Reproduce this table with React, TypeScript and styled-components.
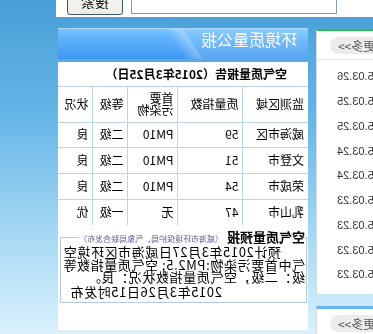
import styled, { createGlobalStyle } from 'styled-components';

//#region global
const GlobalStyle = createGlobalStyle`
  *, *::before, *::after { box-sizing: border-box; }
  html, body { margin: 0; padding: 0; }
  body {
    width: 373px;
    height: 334px;
    overflow: hidden;
    background: linear-gradient(to bottom, #479fd7 0, #66b6e7 35%, #a6d8f3 70%, #daf1fc 100%);
    font-family: "Noto Sans CJK SC", "Noto Sans", sans-serif;
    color: #000;
  }
`;

// the whole shot is flipped left to right
const Mirror = styled.div`
  width: 373px;
  height: 334px;
  overflow: hidden;
  transform: scaleX(-1);
`;
//#endregion

//#region search bar
const SearchBar = styled.div`
  width: 317px;
  height: 17px;
  background: #fff;
  display: flex;
  align-items: flex-end;
  gap: 8px;
  padding-left: 36px;
  overflow: hidden;
`;

const SearchInput = styled.input`
  width: 206px;
  height: 24px;
  margin-bottom: 3px;
  border: 1px solid #7f9db9;
  background: #fff;
  flex-shrink: 0;
`;

const SearchButton = styled.button`
  width: 56px;
  height: 28px;
  margin-bottom: 2px;
  flex-shrink: 0;
  border: 1px solid #3d5873;
  border-radius: 3px;
  background: linear-gradient(to bottom, #fbfbf8, #ecebe5);
  font-family: "Noto Sans CJK SC", sans-serif;
  font-size: 14px;
  color: #111;
  padding: 0;
`;
//#endregion

//#region columns
const Columns = styled.div`
  display: flex;
  align-items: flex-start;
  gap: 8px;
  margin-top: 11px;
`;

const Side = styled.div`
  width: 57px;
  margin-top: 1px;
  display: flex;
  flex-direction: column;
  gap: 12px;
  flex-shrink: 0;
`;

const SidePanel = styled.div<{ $accent: string; $line: number; $height: number }>`
  height: ${(p) => p.$height}px;
  background: #fff;
  border-top: ${(p) => p.$line}px solid ${(p) => p.$accent};
  border-right: 1px solid #d4d9de;
  overflow: hidden;
`;

const SideHead = styled.div`
  height: 29px;
  display: flex;
  justify-content: flex-end;
  align-items: center;
  padding-right: 13px;
  border-bottom: 1px solid #e3e3e3;
`;

const MoreButton = styled.span`
  flex-shrink: 0;
  height: 17px;
  line-height: 17px;
  padding: 0 8px;
  border-radius: 9px;
  background: #ececec;
  color: #555;
  font-size: 12px;
  white-space: nowrap;
`;

const DateList = styled.ul`
  list-style: none;
  margin: 0;
  padding: 4px 0 0;
`;

const DateRow = styled.li`
  height: 24.75px;
  display: flex;
  justify-content: flex-end;
  align-items: center;
  padding-right: 20px;
  font-family: "Liberation Sans", Arial, sans-serif;
  font-size: 11px;
  color: #333;
  white-space: nowrap;
`;
//#endregion

//#region main
const Main = styled.div`
  width: 250px;
  flex-shrink: 0;
  display: flex;
  flex-direction: column;
  gap: 3px;
`;

const Banner = styled.div`
  height: 31px;
  border-top: 1px solid #a6dbff;
  padding: 1px 0 0 11px;
  color: #fff;
  font-size: 16px;
  line-height: 18px;
  background:
    linear-gradient(123deg, rgba(255,255,255,0.14) 0%, rgba(255,255,255,0.14) 46%, rgba(255,255,255,0.32) 47%, rgba(255,255,255,0) 53%),
    linear-gradient(to bottom, #7cc6ff 0, #66b8fd 20%, #3e96f1 100%);
`;

const Panel = styled.div`
  height: 268px;
  background: #fff;
`;

const Table = styled.table`
  width: 250px;
  border-collapse: collapse;
  border-style: hidden;
  table-layout: fixed;
  font-size: 12px;
`;

const Cell = styled.td`
  border: 1px solid #bcd4e7;
  padding: 0 0 0 4px;
  text-align: left;
  vertical-align: middle;
  white-space: nowrap;
  line-height: 12.5px;
`;

const TitleCell = styled.td`
  height: 24px;
  border-bottom: 1px solid #bcd4e7;
  padding-left: 21px;
  font-size: 12px;
  font-weight: bold;
  text-align: left;
  white-space: nowrap;
`;

const Row = styled.tr<{ $h: number }>`
  height: ${(p) => p.$h}px;
`;

const Forecast = styled.fieldset`
  margin: 3px 2px 0 1px;
  padding: 0 0 3px 1px;
  border: 1px solid #b4cbdd;
`;

const Legend = styled.legend`
  padding: 0;
  line-height: 15px;
  white-space: nowrap;
`;

const LegendTitle = styled.strong`
  font-size: 13px;
`;

const LegendNote = styled.span`
  margin-left: 4px;
  font-size: 8px;
  color: #5f5f96;
`;

const ForecastLine = styled.div<{ $indent?: number; $right?: boolean; $gap?: number }>`
  font-size: 13px;
  letter-spacing: 0.6px;
  line-height: 12.5px;
  white-space: nowrap;
  padding-left: ${(p) => p.$indent ?? 0}px;
  padding-right: ${(p) => (p.$right ? 9 : 0)}px;
  margin-top: ${(p) => p.$gap ?? 0}px;
  text-align: ${(p) => (p.$right ? 'right' : 'left')};
`;
//#endregion

const dates = [
  '2015.03.26', '2015.03.25', '2015.03.25', '2015.03.24', '2015.03.24',
  '2015.03.23', '2015.03.23', '2015.03.23', '2015.03.23',
];

const rows = [
  { area: '威海市区', index: '59', main: 'PM10', level: '二级', state: '良', h: 25 },
  { area: '文登市', index: '51', main: 'PM10', level: '二级', state: '良', h: 26 },
  { area: '荣成市', index: '54', main: 'PM10', level: '二级', state: '良', h: 26 },
  { area: '乳山市', index: '47', main: '无', level: '一级', state: '优', h: 26 },
];

export default function App() {
  return (
    <>
      <GlobalStyle />
      <Mirror>
        <SearchBar>
          <SearchInput type="text" />
          <SearchButton type="button">搜索</SearchButton>
        </SearchBar>
        <Columns>
          <Side>
            <SidePanel $accent="#25c452" $line={2} $height={265}>
              <SideHead>
                <MoreButton>更多&gt;&gt;</MoreButton>
              </SideHead>
              <DateList>
                {dates.map((d, i) => (
                  <DateRow key={i}>{d}</DateRow>
                ))}
              </DateList>
            </SidePanel>
            <SidePanel $accent="#66b5f0" $line={3} $height={40}>
              <SideHead>
                <MoreButton>更多&gt;&gt;</MoreButton>
              </SideHead>
            </SidePanel>
          </Side>
          <Main>
            <Banner>环境质量公报</Banner>
            <Panel>
              <Table>
                <colgroup>
                  <col style={{ width: 65 }} />
                  <col style={{ width: 65 }} />
                  <col style={{ width: 50 }} />
                  <col style={{ width: 35 }} />
                  <col style={{ width: 35 }} />
                </colgroup>
                <tbody>
                  <tr>
                    <TitleCell colSpan={5}>空气质量报告（2015年3月25日）</TitleCell>
                  </tr>
                  <Row $h={36}>
                    <Cell>监测区域</Cell>
                    <Cell>质量指数</Cell>
                    <Cell>首要<br />污染物</Cell>
                    <Cell>等级</Cell>
                    <Cell>状况</Cell>
                  </Row>
                  {rows.map((r) => (
                    <Row $h={r.h} key={r.area}>
                      <Cell>{r.area}</Cell>
                      <Cell>{r.index}</Cell>
                      <Cell>{r.main}</Cell>
                      <Cell>{r.level}</Cell>
                      <Cell>{r.state}</Cell>
                    </Row>
                  ))}
                </tbody>
              </Table>
              <Forecast>
                <Legend>
                  <LegendTitle>空气质量预报</LegendTitle>
                  <LegendNote>（威海市环境保护局、气象局联合发布）</LegendNote>
                </Legend>
                <ForecastLine $indent={24}>预计2015年3月27日威海市区环境空</ForecastLine>
                <ForecastLine>气中首要污染物:PM2.5; 空气质量指数等</ForecastLine>
                <ForecastLine>级：二级，空气质量指数状况：良。</ForecastLine>
                <ForecastLine $right $gap={2.5}>2015年3月26日15时发布</ForecastLine>
              </Forecast>
            </Panel>
          </Main>
        </Columns>
      </Mirror>
    </>
  );
}
